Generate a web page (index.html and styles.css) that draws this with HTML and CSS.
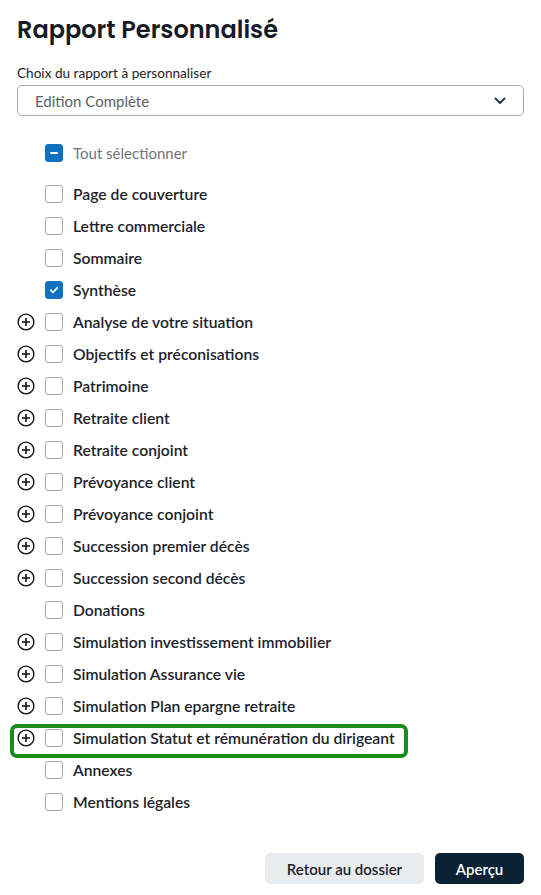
FILE: index.html
```html
<!DOCTYPE html>
<html lang="fr">
<head>
<meta charset="utf-8">
<title>Rapport Personnalisé</title>
<link rel="stylesheet" href="styles.css">
</head>
<body>
<div class="page">
  <h1 class="title">Rapport Personnalisé</h1>
  <label class="field-label">Choix du rapport à personnaliser</label>
  <div class="select">
    <span class="select-value">Edition Complète</span>
    <svg class="chevron" width="12" height="8" viewBox="0 0 12 8"><path d="M1.5 1.5 L6 6 L10.5 1.5" fill="none" stroke="#2b3a4a" stroke-width="2" stroke-linecap="round" stroke-linejoin="round"/></svg>
  </div>

  <div class="all-row">
    <span class="spacer"></span>
    <span class="cb cb-on"><svg width="10" height="10" viewBox="0 0 10 10"><path d="M2 5 H8" stroke="#fff" stroke-width="2" stroke-linecap="round"/></svg></span>
    <span class="all-label">Tout sélectionner</span>
  </div>

  <ul class="list">
    <li class="row"><span class="spacer"></span><span class="cb"></span><span class="label">Page de couverture</span></li>
    <li class="row"><span class="spacer"></span><span class="cb"></span><span class="label">Lettre commerciale</span></li>
    <li class="row"><span class="spacer"></span><span class="cb"></span><span class="label">Sommaire</span></li>
    <li class="row"><span class="spacer"></span><span class="cb cb-on"><svg width="10" height="10" viewBox="0 0 10 10"><path d="M1.8 5.2 L4 7.3 L8.3 2.8" fill="none" stroke="#fff" stroke-width="1.8" stroke-linecap="round" stroke-linejoin="round"/></svg></span><span class="label">Synthèse</span></li>
    <li class="row"><span class="plus"><svg width="18" height="18" viewBox="0 0 18 18"><circle cx="9" cy="9" r="7.9" fill="none" stroke="#111" stroke-width="1.4"/><path d="M9 5 V13 M5 9 H13" stroke="#111" stroke-width="1.6"/></svg></span><span class="cb"></span><span class="label">Analyse de votre situation</span></li>
    <li class="row"><span class="plus"><svg width="18" height="18" viewBox="0 0 18 18"><circle cx="9" cy="9" r="7.9" fill="none" stroke="#111" stroke-width="1.4"/><path d="M9 5 V13 M5 9 H13" stroke="#111" stroke-width="1.6"/></svg></span><span class="cb"></span><span class="label">Objectifs et préconisations</span></li>
    <li class="row"><span class="plus"><svg width="18" height="18" viewBox="0 0 18 18"><circle cx="9" cy="9" r="7.9" fill="none" stroke="#111" stroke-width="1.4"/><path d="M9 5 V13 M5 9 H13" stroke="#111" stroke-width="1.6"/></svg></span><span class="cb"></span><span class="label">Patrimoine</span></li>
    <li class="row"><span class="plus"><svg width="18" height="18" viewBox="0 0 18 18"><circle cx="9" cy="9" r="7.9" fill="none" stroke="#111" stroke-width="1.4"/><path d="M9 5 V13 M5 9 H13" stroke="#111" stroke-width="1.6"/></svg></span><span class="cb"></span><span class="label">Retraite client</span></li>
    <li class="row"><span class="plus"><svg width="18" height="18" viewBox="0 0 18 18"><circle cx="9" cy="9" r="7.9" fill="none" stroke="#111" stroke-width="1.4"/><path d="M9 5 V13 M5 9 H13" stroke="#111" stroke-width="1.6"/></svg></span><span class="cb"></span><span class="label">Retraite conjoint</span></li>
    <li class="row"><span class="plus"><svg width="18" height="18" viewBox="0 0 18 18"><circle cx="9" cy="9" r="7.9" fill="none" stroke="#111" stroke-width="1.4"/><path d="M9 5 V13 M5 9 H13" stroke="#111" stroke-width="1.6"/></svg></span><span class="cb"></span><span class="label">Prévoyance client</span></li>
    <li class="row"><span class="plus"><svg width="18" height="18" viewBox="0 0 18 18"><circle cx="9" cy="9" r="7.9" fill="none" stroke="#111" stroke-width="1.4"/><path d="M9 5 V13 M5 9 H13" stroke="#111" stroke-width="1.6"/></svg></span><span class="cb"></span><span class="label">Prévoyance conjoint</span></li>
    <li class="row"><span class="plus"><svg width="18" height="18" viewBox="0 0 18 18"><circle cx="9" cy="9" r="7.9" fill="none" stroke="#111" stroke-width="1.4"/><path d="M9 5 V13 M5 9 H13" stroke="#111" stroke-width="1.6"/></svg></span><span class="cb"></span><span class="label">Succession premier décès</span></li>
    <li class="row"><span class="plus"><svg width="18" height="18" viewBox="0 0 18 18"><circle cx="9" cy="9" r="7.9" fill="none" stroke="#111" stroke-width="1.4"/><path d="M9 5 V13 M5 9 H13" stroke="#111" stroke-width="1.6"/></svg></span><span class="cb"></span><span class="label">Succession second décès</span></li>
    <li class="row"><span class="spacer"></span><span class="cb"></span><span class="label">Donations</span></li>
    <li class="row"><span class="plus"><svg width="18" height="18" viewBox="0 0 18 18"><circle cx="9" cy="9" r="7.9" fill="none" stroke="#111" stroke-width="1.4"/><path d="M9 5 V13 M5 9 H13" stroke="#111" stroke-width="1.6"/></svg></span><span class="cb"></span><span class="label">Simulation investissement immobilier</span></li>
    <li class="row"><span class="plus"><svg width="18" height="18" viewBox="0 0 18 18"><circle cx="9" cy="9" r="7.9" fill="none" stroke="#111" stroke-width="1.4"/><path d="M9 5 V13 M5 9 H13" stroke="#111" stroke-width="1.6"/></svg></span><span class="cb"></span><span class="label">Simulation Assurance vie</span></li>
    <li class="row"><span class="plus"><svg width="18" height="18" viewBox="0 0 18 18"><circle cx="9" cy="9" r="7.9" fill="none" stroke="#111" stroke-width="1.4"/><path d="M9 5 V13 M5 9 H13" stroke="#111" stroke-width="1.6"/></svg></span><span class="cb"></span><span class="label">Simulation Plan epargne retraite</span></li>
    <li class="row row-highlight"><span class="plus"><svg width="18" height="18" viewBox="0 0 18 18"><circle cx="9" cy="9" r="7.9" fill="none" stroke="#111" stroke-width="1.4"/><path d="M9 5 V13 M5 9 H13" stroke="#111" stroke-width="1.6"/></svg></span><span class="cb"></span><span class="label">Simulation Statut et rémunération du dirigeant</span></li>
    <li class="row"><span class="spacer"></span><span class="cb"></span><span class="label">Annexes</span></li>
    <li class="row"><span class="spacer"></span><span class="cb"></span><span class="label">Mentions légales</span></li>
  </ul>

  <div class="footer">
    <button class="btn btn-secondary">Retour au dossier</button>
    <button class="btn btn-primary">Aperçu</button>
  </div>
</div>
</body>
</html>
```

FILE: styles.css
```css
* { box-sizing: border-box; }

body {
  margin: 0;
  background: #fff;
  font-family: "Source Sans Pro", "Lato", "Noto Sans", sans-serif;
  color: #1d232b;
}

.page {
  padding: 13px 17px 0 17px;
}

.title {
  margin: 0;
  font-family: "Poppins", "Inter", "Open Sans", sans-serif;
  font-weight: 600;
  font-size: 24px;
  line-height: 34px;
  color: #161b26;
  letter-spacing: 0;
}

.field-label {
  display: block;
  margin-top: 18px;
  font-size: 13.6px;
  line-height: 16px;
  color: #1d232b;
}

.select {
  margin-top: 4px;
  height: 31px;
  border: 1px solid #a3adb8;
  border-radius: 5px;
  display: flex;
  align-items: center;
  justify-content: space-between;
  padding: 0 17px 0 17px;
}

.select-value {
  font-size: 15px;
  color: #5b5f66;
}

.chevron { display: block; }

.all-row {
  margin-top: 21px;
  height: 32px;
  display: flex;
  align-items: center;
}

.all-label {
  font-size: 15px;
  color: #6f747b;
}

.list {
  list-style: none;
  margin: 9px 0 0 0;
  padding: 0;
}

.row {
  height: 32px;
  display: flex;
  align-items: center;
}

.spacer, .plus {
  width: 28px;
  flex: none;
  display: flex;
  align-items: center;
}

.plus svg { display: block; }

.cb {
  width: 18px;
  height: 18px;
  flex: none;
  border: 1px solid #a4a9ae;
  border-radius: 3px;
  background: #fff;
  margin-right: 10px;
  display: flex;
  align-items: center;
  justify-content: center;
}

.cb-on {
  background: #1170bf;
  border-color: #1170bf;
}

.cb svg { display: block; }

.label {
  font-size: 15.7px;
  font-weight: 600;
  color: #1d232b;
  white-space: nowrap;
}

.row-highlight {
  position: relative;
  width: fit-content;
}

.row-highlight::after {
  content: "";
  position: absolute;
  left: -7px;
  right: -13px;
  top: 2px;
  bottom: -4px;
  border: 4px solid #1a8c1a;
  border-radius: 7px;
  pointer-events: none;
}

.footer {
  margin-top: 35px;
  display: flex;
  justify-content: flex-end;
  gap: 11px;
}

.btn {
  height: 31px;
  border: none;
  border-radius: 5px;
  font-family: inherit;
  font-size: 15px;
  font-weight: 600;
  padding: 0 20px;
  cursor: pointer;
}

.btn-secondary {
  background: #e9ecef;
  color: #1d232b;
  width: 159px;
}

.btn-primary {
  background: #0a2233;
  color: #fff;
  width: 89px;
}
```
